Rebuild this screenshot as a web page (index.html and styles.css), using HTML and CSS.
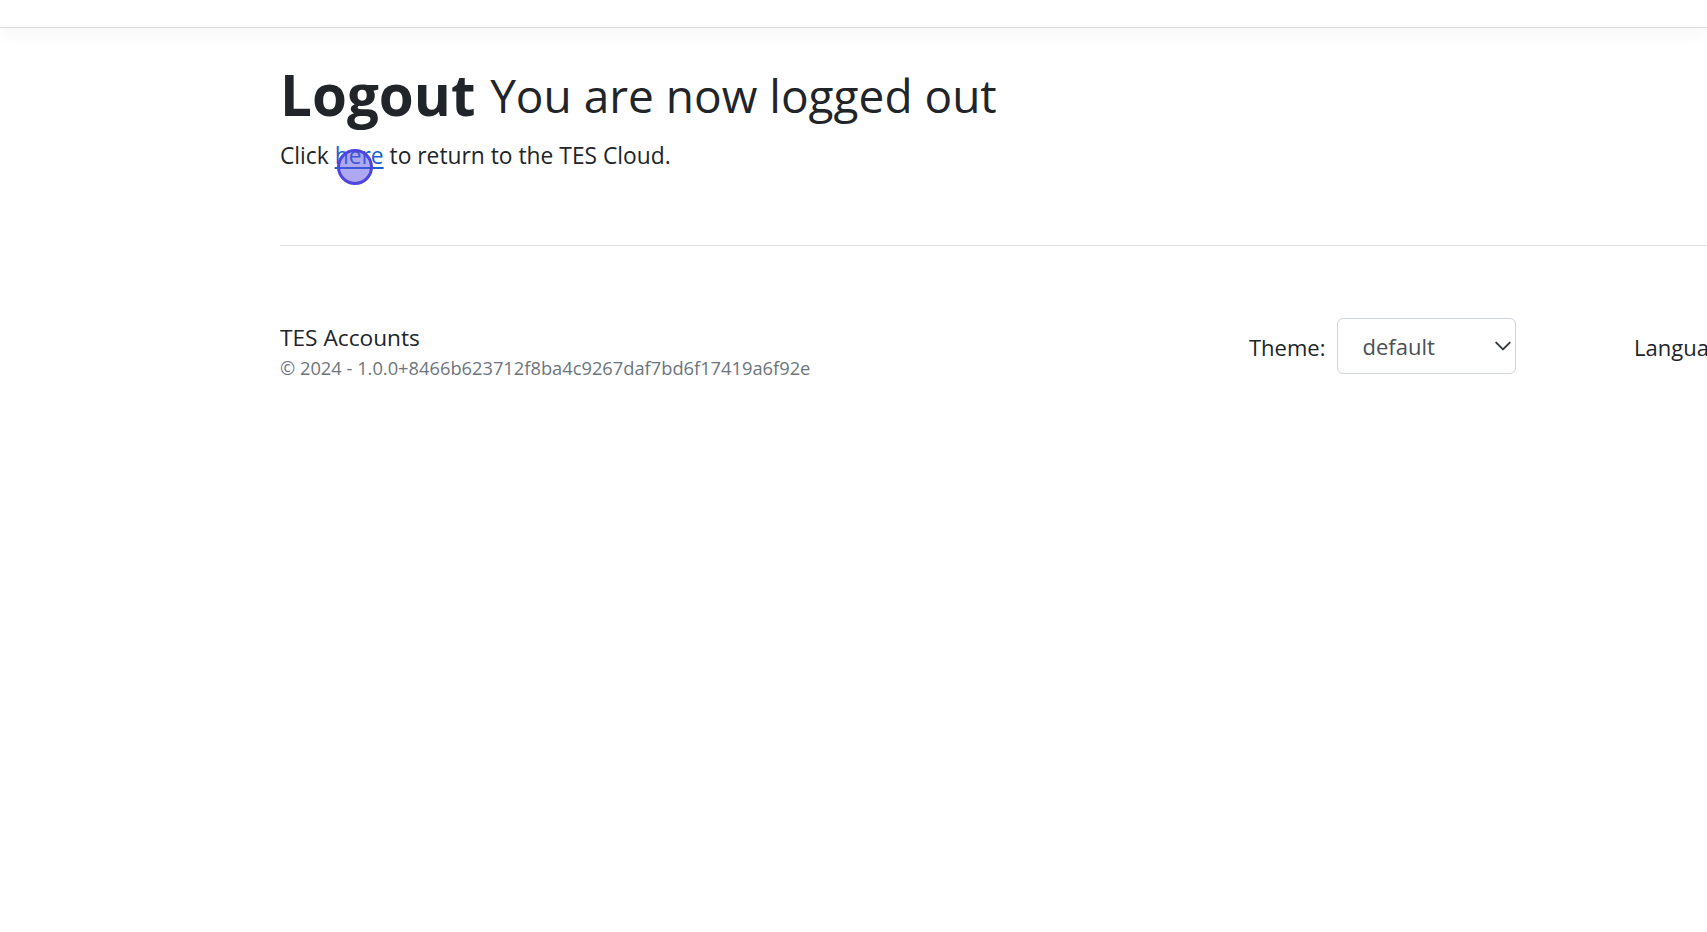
FILE: index.html
```html
<!DOCTYPE html>
<html lang="en">
<head>
<meta charset="utf-8">
<title>Logout - TES Accounts</title>
<link rel="stylesheet" href="styles.css">
</head>
<body>
<header class="topbar"></header>
<main class="page">
  <h1 class="title">Logout <span class="subtitle">You are now logged out</span></h1>
  <p class="lead">Click <a class="link" href="#">here</a> to return to the TES Cloud.</p>
  <hr class="divider">
  <footer class="footer">
    <div class="brand">
      <div class="brand-name">TES Accounts</div>
      <div class="brand-meta">© 2024 - 1.0.0+8466b623712f8ba4c9267daf7bd6f17419a6f92e</div>
    </div>
    <div class="picker">
      <span class="picker-label">Theme:</span>
      <div class="select">
        <span class="select-value">default</span>
        <svg class="chevron" viewBox="0 0 16 16" width="18" height="18"><path d="M2 5l6 6 6-6" fill="none" stroke="#343a40" stroke-width="1.8" stroke-linecap="round" stroke-linejoin="round"/></svg>
      </div>
    </div>
    <div class="picker">
      <span class="picker-label">Language:</span>
      <div class="select">
        <span class="select-value">English</span>
        <svg class="chevron" viewBox="0 0 16 16" width="18" height="18"><path d="M2 5l6 6 6-6" fill="none" stroke="#343a40" stroke-width="1.8" stroke-linecap="round" stroke-linejoin="round"/></svg>
      </div>
    </div>
  </footer>
</main>
<div class="click-marker"></div>
</body>
</html>
```

FILE: styles.css
```css
html, body {
  margin: 0;
  padding: 0;
  overflow: hidden;
  background: #fff;
}
body {
  color: #212529;
  font-family: "Open Sans", "Noto Sans", sans-serif;
  height: 932px;
}
.topbar {
  height: 27px;
  border-bottom: 1px solid #dcdde1;
  box-shadow: 0 6px 18px rgba(0, 0, 0, 0.035);
}
.page {
  padding-left: 280px;
}
.title {
  margin: 33px 0 0;
  font-size: 56.5px;
  font-weight: 700;
  line-height: 1.2;
  white-space: nowrap;
}
.subtitle {
  font-size: 46px;
  font-weight: 400;
  vertical-align: 3px;
}
.lead {
  margin: 10px 0 0;
  font-size: 22.8px;
  line-height: 1.5;
}
.link {
  color: #1a5fd6;
  text-decoration: underline;
  text-underline-offset: 3px;
}
.divider {
  margin: 72px 0 0;
  border: 0;
  border-top: 1px solid #e0e0e0;
}
.footer {
  display: grid;
  grid-template-columns: 969px 385px max-content;
  align-items: start;
  margin-top: 72px;
}
.brand-name {
  padding-top: 2px;
  font-size: 22.7px;
  line-height: 1.6;
}
.brand-meta {
  font-size: 18.3px;
  line-height: 1.34;
  color: #6c757d;
}
.picker {
  display: flex;
  align-items: center;
  gap: 12px;
  white-space: nowrap;
}
.picker-label {
  padding-top: 2px;
  font-size: 22px;
}
.select {
  box-sizing: border-box;
  width: 179px;
  height: 56px;
  border: 1px solid #ced4da;
  border-radius: 6px;
  display: flex;
  align-items: center;
  justify-content: space-between;
  padding: 0 3px 0 24px;
  font-size: 22px;
  color: #495057;
}
.click-marker {
  position: absolute;
  left: 337px;
  top: 149px;
  width: 30px;
  height: 30px;
  border: 3px solid #4f45e0;
  border-radius: 50%;
  background: rgba(92, 82, 224, 0.5);
}
```
